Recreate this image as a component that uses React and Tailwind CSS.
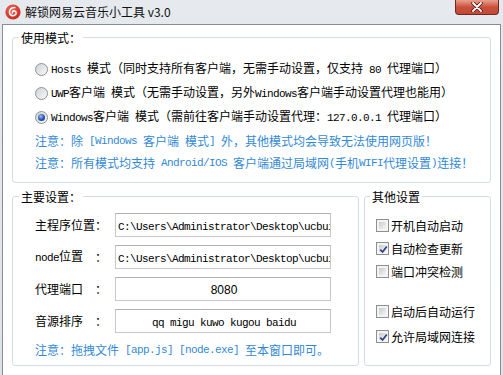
import React from "react";

function T({ text }) {
  const parts = text.split(/([\x20-\x7e]+)/).filter((p) => p.length);
  return parts.map((p, i) =>
    /^[\x20-\x7e]+$/.test(p) ? (
      <span key={i} className="font-['Liberation_Mono',monospace] text-[11px] tracking-[-0.6px] whitespace-pre">
        {p}
      </span>
    ) : (
      <span key={i}>{p}</span>
    )
  );
}

function Radio({ checked, text }) {
  return (
    <div className="flex items-center h-[24px]">
      <span className="w-[13px] h-[13px] rounded-full border border-[#8d9195] bg-linear-to-br from-[#cfd1d3] to-[#fafafa] flex items-center justify-center">
        {checked && (
          <span className="w-[7px] h-[7px] rounded-full bg-[radial-gradient(circle_at_40%_35%,#9cc0f5,#2a4fb0_55%,#0f2566)]" />
        )}
      </span>
      <span className="ml-[3px] leading-[16px]">
        <T text={text} />
      </span>
    </div>
  );
}

function Check({ checked, text, className = "" }) {
  return (
    <div className={"flex items-center h-[23px] " + className}>
      <span className="w-[13px] h-[13px] border border-[#8e8f8f] bg-[#f4f4f4] p-[2px] flex">
        <span className="flex-1 bg-linear-to-br from-[#c9cbcd] to-[#f4f5f6] relative">
          {checked && (
            <svg viewBox="0 0 9 9" className="absolute inset-0 w-[9px] h-[9px]">
              <path d="M1.3 4.6 L3.6 7 L7.8 1.4" stroke="#2c3f88" strokeWidth="1.7" fill="none" />
            </svg>
          )}
        </span>
      </span>
      <span className="ml-[2px] leading-[16px]">{text}</span>
    </div>
  );
}

function Field({ label, value, center, sans }) {
  return (
    <div className="flex items-center h-[24px]">
      <div className="w-[80px] flex items-center">
        <span className="w-[60px] whitespace-nowrap">
          <T text={label} />
        </span>
        <span>：</span>
      </div>
      <div
        className={
          "w-[216px] h-[24px] border border-[#c5c8cc] border-t-[#aeb1b6] bg-white overflow-hidden whitespace-nowrap leading-[22px] pl-[2px] " +
          (center ? "text-center" : "")
        }
      >
        {sans ? (
          <span className="font-['Liberation_Sans',sans-serif] text-[12px]">{value}</span>
        ) : (
          <T text={value} />
        )}
      </div>
    </div>
  );
}

export default function App() {
  return (
    <div className="w-[503px] h-[375px] overflow-hidden bg-linear-to-b from-[#e6eaee] to-[#dde2e7] flex flex-col font-['Noto_Sans_CJK_SC',sans-serif] text-[12px] text-black">
      {/* title bar */}
      <div className="h-[24px] flex items-start shrink-0">
        <svg viewBox="0 0 16 16" className="w-[16px] h-[16px] ml-[5px] mt-[4px]">
          <defs>
            <radialGradient id="g" cx="40%" cy="35%" r="70%">
              <stop offset="0" stopColor="#f0685a" />
              <stop offset="1" stopColor="#c8261d" />
            </radialGradient>
          </defs>
          <circle cx="8" cy="8" r="7.6" fill="url(#g)" />
          <path
            d="M9.8 3.6 C6.8 3.4 4.2 5.4 4.4 8.4 C4.6 11 7.4 12.4 9.8 11.2 C11.8 10.1 11.6 7.2 9.4 6.9 C7.9 6.7 7 7.9 7.4 9.1"
            stroke="white"
            strokeWidth="1.5"
            fill="none"
            strokeLinecap="round"
          />
        </svg>
        <span className="ml-[4px] mt-[4px] leading-[16px] text-[12px] text-[#111]">解锁网易云音乐小工具 v3.0</span>
        <div className="ml-auto mr-[4px] w-[44px] h-[15px] rounded-b-[4px] border border-t-0 border-[#6e2a22] bg-linear-to-b from-[#e9a08f] via-[#c9503d] to-[#c24a35] flex items-center justify-center">
          <svg viewBox="0 0 12 10" className="w-[12px] h-[10px]">
            <path d="M2 1 L10 9 M10 1 L2 9" stroke="#4a1a14" strokeWidth="3.4" strokeLinecap="round" />
            <path d="M2 1 L10 9 M10 1 L2 9" stroke="#ffffff" strokeWidth="1.8" strokeLinecap="round" />
          </svg>
        </div>
      </div>

      {/* content */}
      <div className="flex-1 mx-[2px] border border-b-0 border-[#878d95] bg-white px-[9px] flex flex-col">
        <fieldset className="mt-[5px] h-[153px] border border-[#d5dce2] rounded-[3px]">
          <legend className="ml-[6px] px-[2px] leading-[15px] text-[12px]">使用模式：</legend>
          <div className="flex flex-col pt-[12px] pl-[22px]">
            <Radio text="Hosts 模式（同时支持所有客户端，无需手动设置，仅支持 80 代理端口）" />
            <Radio text="UWP客户端 模式（无需手动设置，另外Windows客户端手动设置代理也能用）" />
            <Radio checked text="Windows客户端 模式（需前往客户端手动设置代理：127.0.0.1 代理端口）" />
            <div className="h-[22px] flex items-center text-[#3389d6] mt-[1px]">
              <T text="注意：除 [Windows 客户端 模式] 外，其他模式均会导致无法使用网页版！" />
            </div>
            <div className="h-[22px] flex items-center text-[#3389d6]">
              <T text="注意：所有模式均支持 Android/IOS 客户端通过局域网(手机WIFI代理设置)连接！" />
            </div>
          </div>
        </fieldset>

        <div className="flex mt-[6px] gap-[5px]">
          <fieldset className="w-[347px] h-[177px] border border-[#d5dce2] rounded-[3px]">
            <legend className="ml-[6px] px-[2px] leading-[15px] text-[12px]">主要设置：</legend>
            <div className="flex flex-col gap-[8px] pt-[9px] pl-[22px]">
              <Field label="主程序位置" value={"C:\\Users\\Administrator\\Desktop\\ucbuild\\app.js"} />
              <Field label="node位置" value={"C:\\Users\\Administrator\\Desktop\\ucbuild\\node.exe"} />
              <Field label="代理端口" value="8080" center sans />
              <Field label="音源排序" value="qq migu kuwo kugou baidu" center />
              <div className="h-[18px] flex items-center text-[#3389d6]">
                <T text="注意：拖拽文件 [app.js] [node.exe] 至本窗口即可。" />
              </div>
            </div>
          </fieldset>
          <fieldset className="w-[127px] h-[177px] border border-[#d5dce2] rounded-[3px]">
            <legend className="ml-[5px] px-[2px] leading-[15px] text-[12px]">其他设置</legend>
            <div className="flex flex-col pt-[10px] pl-[11px]">
              <Check text="开机自动启动" />
              <Check checked text="自动检查更新" />
              <Check text="端口冲突检测" />
              <Check text="启动后自动运行" className="mt-[17px]" />
              <Check checked text="允许局域网连接" className="mt-[2px]" />
            </div>
          </fieldset>
        </div>
      </div>
    </div>
  );
}
